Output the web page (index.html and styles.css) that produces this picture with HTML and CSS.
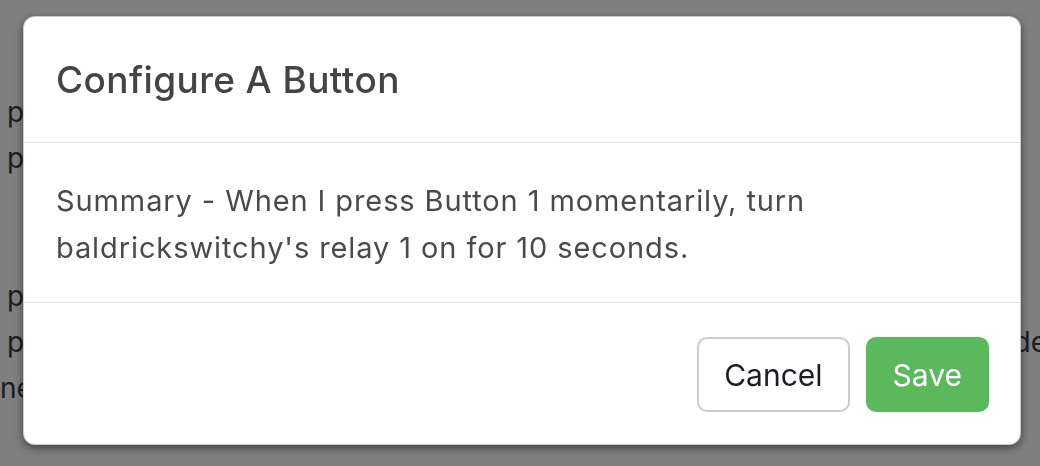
FILE: index.html
```html
<!DOCTYPE html>
<html>
<head>
<meta charset="utf-8">
<link rel="stylesheet" href="styles.css">
</head>
<body>
<div class="page">
  <p class="line first">p</p>
  <p class="line">p</p>
  <p class="line blank">&nbsp;</p>
  <p class="line blank">&nbsp;</p>
  <p class="line">p</p>
  <p class="line split"><span>p</span><span class="tail">de</span></p>
  <p class="line flush">ne</p>
</div>
<div class="backdrop"></div>
<div class="overlay">
  <div class="modal">
    <div class="modal-header">
      <h4 class="modal-title">Configure A Button</h4>
    </div>
    <div class="modal-body">
      Summary - When I press Button 1 momentarily, turn baldrickswitchy's relay 1 on for 10 seconds.
    </div>
    <div class="modal-footer">
      <button class="btn btn-default">Cancel</button>
      <button class="btn btn-success">Save</button>
    </div>
  </div>
</div>
</body>
</html>
```
FILE: styles.css
```css
html, body {
  margin: 0;
  padding: 0;
  background: #fff;
  overflow: hidden;
  width: 1040px;
  height: 466px;
}
body {
  font-family: Inter, "Liberation Sans", sans-serif;
  color: #444;
}
.page {
  padding-top: 89px;
}
.line {
  margin: 0;
  font-size: 28px;
  line-height: 46px;
  height: 46px;
  padding-left: 7px;
  white-space: nowrap;
  color: #3a3a3a;
}
.line.flush {
  padding-left: 0;
}
.line.split {
  display: flex;
  justify-content: space-between;
}
.line.split .tail {
  margin-right: -7px;
}
.backdrop {
  position: fixed;
  inset: 0;
  background: rgba(0, 0, 0, 0.5);
}
.overlay {
  position: fixed;
  inset: 0;
  padding: 16px 19px 0 23px;
}
.modal {
  background: #fff;
  border: 1px solid rgba(0, 0, 0, 0.2);
  border-radius: 12px;
  box-shadow: 0 3px 9px rgba(0, 0, 0, 0.5);
  overflow: hidden;
}
.modal-header {
  height: 125px;
  display: flex;
  align-items: center;
  padding: 0 32px;
  border-bottom: 1px solid #e5e5e5;
}
.modal-title {
  margin: 0;
  font-size: 37px;
  font-weight: 500;
  color: #444;
  letter-spacing: 0.4px;
}
.modal-body {
  padding: 34px 32px 31px;
  font-size: 29px;
  letter-spacing: 0.9px;
  line-height: 47px;
  color: #4a4a4a;
  height: 94px;
}
.modal-footer {
  display: flex;
  justify-content: flex-end;
  gap: 16px;
  padding: 34px 31px 32px;
  border-top: 1px solid #e5e5e5;
}
.btn {
  font-family: Inter, "Liberation Sans", sans-serif;
  font-size: 30px;
  height: 75px;
  border-radius: 10px;
  padding: 0 25px;
  cursor: pointer;
}
.btn-default {
  background: #fff;
  border: 2px solid #ccc;
  color: #1d1d27;
}
.btn-success {
  background: #5cb85c;
  border: 2px solid #5cb85c;
  color: #fff;
}
```
